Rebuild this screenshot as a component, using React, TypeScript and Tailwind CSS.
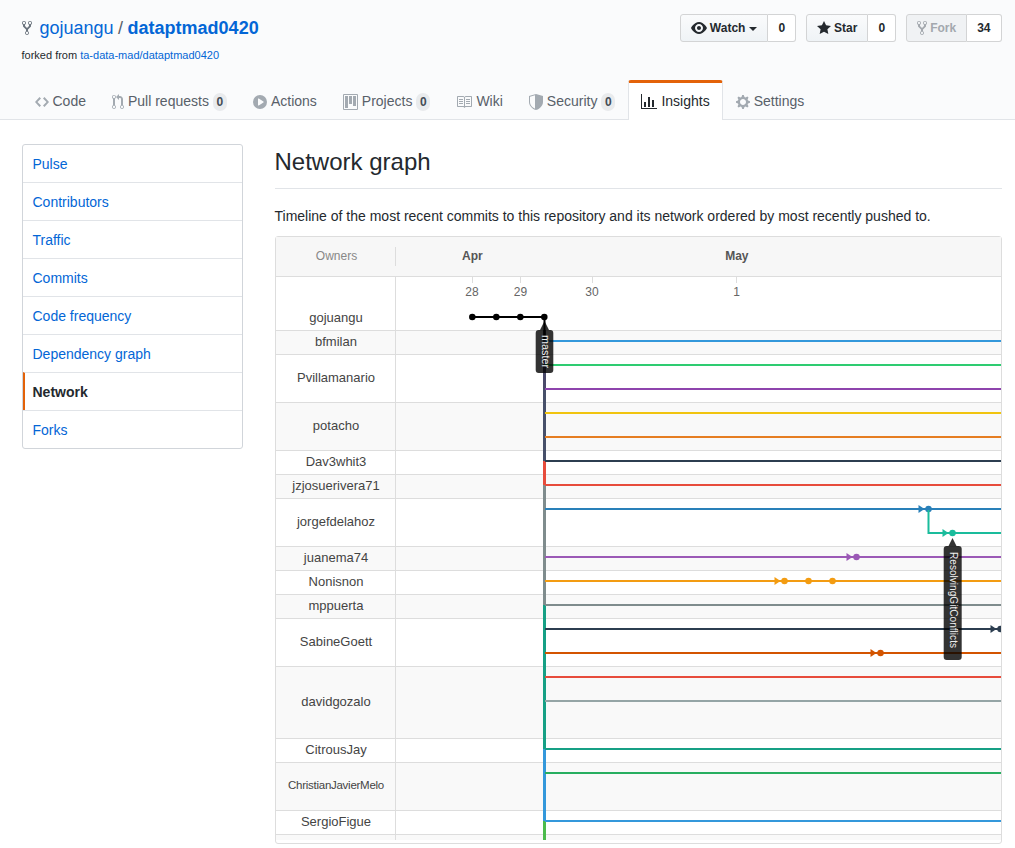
import React from "react";

const P = {
  code: ["0 0 14 16", "M9.5 3L8 4.5 11.5 8 8 11.5 9.5 13 14 8 9.5 3zm-5 0L0 8l4.5 5L6 11.5 2.5 8 6 4.5 4.5 3z"],
  pr: ["0 0 12 16", "M11 11.28V5c-.03-.78-.34-1.47-.94-2.06C9.46 2.35 8.78 2.03 8 2H7V0L4 3l3 3V4h1c.27.02.48.11.69.31.21.2.3.42.31.69v6.28A1.993 1.993 0 0 0 10 15a1.993 1.993 0 0 0 1-3.72zm-1 2.92c-.66 0-1.2-.55-1.2-1.2 0-.65.55-1.2 1.2-1.2.65 0 1.2.55 1.2 1.2 0 .65-.55 1.2-1.2 1.2zM4 3c0-1.11-.89-2-2-2a1.993 1.993 0 0 0-1 3.72v6.56A1.993 1.993 0 0 0 2 15a1.993 1.993 0 0 0 1-3.72V4.72c.59-.34 1-.98 1-1.72zm-.8 10c0 .66-.55 1.2-1.2 1.2-.65 0-1.2-.55-1.2-1.2 0-.65.55-1.2 1.2-1.2.65 0 1.2.55 1.2 1.2zM2 4.2C1.34 4.2.8 3.65.8 3c0-.65.55-1.2 1.2-1.2.65 0 1.2.55 1.2 1.2 0 .65-.55 1.2-1.2 1.2z"],
  play: ["0 0 14 16", "M14 8A7 7 0 1 1 0 8a7 7 0 0 1 14 0zm-8.223 3.482l4.599-3.066a.5.5 0 0 0 0-.832L5.777 4.518A.5.5 0 0 0 5 4.934v6.132a.5.5 0 0 0 .777.416z"],
  project: ["0 0 15 16", "M10 12h3V2h-3v10zm-4-2h3V2H6v8zm-4 4h3V2H2v12zm-1 1h13V1H1v14zM14 0H1a1 1 0 0 0-1 1v14a1 1 0 0 0 1 1h13a1 1 0 0 0 1-1V1a1 1 0 0 0-1-1z"],
  book: ["0 0 16 16", "M3 5h4v1H3V5zm0 3h4V7H3v1zm0 2h4V9H3v1zm11-5h-4v1h4V5zm0 2h-4v1h4V7zm0 2h-4v1h4V9zm2-6v9c0 .55-.45 1-1 1H9.5l-1 1-1-1H2c-.55 0-1-.45-1-1V3c0-.55.45-1 1-1h5.5l1 1 1-1H15c.55 0 1 .45 1 1zm-8 .5L7.5 3H2v9h6V3.5zm7-.5H9.5l-.5.5V12h6V3z"],
  shield: ["0 0 14 16", "M0 2l7-2 7 2v6.02C14 12.69 8.69 16 7 16c-1.69 0-7-3.31-7-7.98V2zm1 .75v5.27c0 3.58 3.3 5.98 5 6.61V1.33L1 2.75z"],
  graph: ["0 0 16 16", "M16 14v1H0V0h1v14h15zM5 13H3V8h2v5zm4 0H7V3h2v10zm4 0h-2V6h2v7z"],
  gear: ["0 0 14 16", "M14 8.77v-1.6l-1.94-.64-.45-1.09.88-1.84-1.13-1.13-1.81.91-1.09-.45-.69-1.92h-1.6l-.63 1.94-1.11.45-1.84-.88-1.13 1.13.91 1.81-.45 1.09L0 7.23v1.59l1.94.64.45 1.09-.88 1.84 1.13 1.13 1.81-.91 1.09.45.69 1.92h1.59l.63-1.94 1.11-.45 1.84.88 1.13-1.13-.92-1.81.47-1.09L14 8.75v.02zM7 11c-1.66 0-3-1.34-3-3s1.34-3 3-3 3 1.34 3 3-1.34 3-3 3z"],
  eye: ["0 0 16 16", "M8.06 2C3 2 0 8 0 8s3 6 8.06 6C13 14 16 8 16 8s-3-6-7.94-6zM8 12c-2.2 0-4-1.78-4-4 0-2.2 1.8-4 4-4 2.22 0 4 1.8 4 4 0 2.22-1.78 4-4 4zm2-4c0 1.11-.89 2-2 2-1.11 0-2-.89-2-2 0-1.11.89-2 2-2 1.11 0 2 .89 2 2z"],
  star: ["0 0 14 16", "M14 6l-4.9-.64L7 1 4.9 5.36 0 6l3.6 3.26L2.67 14 7 11.67 11.33 14l-.93-4.74L14 6z"],
  fork: ["0 0 10 16", "M8 1a1.993 1.993 0 0 0-1 3.72V6L5 8 3 6V4.72A1.993 1.993 0 0 0 2 1a1.993 1.993 0 0 0-1 3.72V6.5l3 3v1.78A1.993 1.993 0 0 0 5 15a1.993 1.993 0 0 0 1-3.72V9.5l3-3V4.72A1.993 1.993 0 0 0 8 1zM2 4.2C1.34 4.2.8 3.65.8 3c0-.65.55-1.2 1.2-1.2.65 0 1.2.55 1.2 1.2 0 .65-.55 1.2-1.2 1.2zm3 10c-.66 0-1.2-.55-1.2-1.2 0-.65.55-1.2 1.2-1.2.65 0 1.2.55 1.2 1.2 0 .65-.55 1.2-1.2 1.2zm3-10c-.66 0-1.2-.55-1.2-1.2 0-.65.55-1.2 1.2-1.2.65 0 1.2.55 1.2 1.2 0 .65-.55 1.2-1.2 1.2z"],
} as const;

function Icon({ n, className }: { n: keyof typeof P; className: string }) {
  return (
    <svg viewBox={P[n][0]} className={className} fill="currentColor" aria-hidden>
      <path fillRule="evenodd" d={P[n][1]} />
    </svg>
  );
}

function Counter({ v }: { v: string }) {
  return (
    <span className="ml-1 inline-block h-[18px] rounded-[20px] bg-[#e9ebed] px-[3.67px] text-center text-[12px] font-semibold leading-[18px] text-[#444d56]">
      {v}
    </span>
  );
}

function Tab({ icon, w, label, count, active }: { icon: keyof typeof P; w: string; label: string; count?: string; active?: boolean }) {
  return (
    <div
      className={
        active
          ? "-mb-px flex h-[40px] items-center rounded-t-[3px] border-x border-t-[3px] border-x-[#e1e4e8] border-t-[#e36209] bg-white px-3 text-[#24292e]"
          : "flex h-[40px] items-center border-t-[3px] border-transparent px-[13px] pt-0 text-[#586069]"
      }
    >
      <Icon n={icon} className={`${w} h-4 mr-1 ${active ? "text-[#24292e]" : "text-[#a3aab1]"}`} />
      <span>{label}</span>
      {count && <Counter v={count} />}
    </div>
  );
}

function Btn({ icon, w, label, caret, count, disabled }: { icon: keyof typeof P; w: string; label: string; caret?: boolean; count: string; disabled?: boolean }) {
  return (
    <div className="flex h-[28px] text-[12px] font-semibold leading-[20px]">
      <div className={`flex items-center rounded-l-[3px] border border-[#d3d4d5] px-[10px] ${disabled ? "bg-[#f0f2f4] text-[#a3a8ae]" : "bg-gradient-to-b from-[#fafbfc] to-[#eff3f6] text-[#24292e]"}`}>
        <Icon n={icon} className={`${w} h-4 mr-[3px] ${disabled ? "text-[#a3a8ae]" : ""}`} />
        <span>{label}</span>
        {caret && <span className="ml-1 mt-px h-0 w-0 border-x-4 border-t-4 border-x-transparent border-t-[#24292e]" />}
      </div>
      <div className="flex items-center rounded-r-[3px] border border-l-0 border-[#d3d4d5] bg-white px-[10px] text-[#24292e]">{count}</div>
    </div>
  );
}

const side = ["Pulse", "Contributors", "Traffic", "Commits", "Code frequency", "Dependency graph", "Network", "Forks"];

const rows: [string, number, string?][] = [
  ["gojuangu", 53],
  ["bfmilan", 24],
  ["Pvillamanario", 48],
  ["potacho", 48],
  ["Dav3whit3", 24],
  ["jzjosuerivera71", 24],
  ["jorgefdelahoz", 48],
  ["juanema74", 24],
  ["Nonisnon", 24],
  ["mppuerta", 24],
  ["SabineGoett", 48],
  ["davidgozalo", 72],
  ["CitrousJay", 24],
  ["ChristianJavierMelo", 48, "small"],
  ["SergioFigue", 24],
  ["", 6],
];

const lines: [number, string][] = [
  [341, "#3498db"], [365, "#2ecc71"], [389, "#8e44ad"], [413, "#f1c40f"], [437, "#e67e22"],
  [461, "#2c3e50"], [485, "#e74c3c"], [509, "#2980b9"], [557, "#9b59b6"], [581, "#f39c12"],
  [605, "#7f8c8d"], [629, "#2c3e50"], [653, "#d35400"], [677, "#e74c3c"], [701, "#95a5a6"],
  [749, "#16a085"], [773, "#27ae60"], [821, "#3498db"],
];

const trunk: [number, number, string][] = [
  [330, 389, "#4a4a6a"], [389, 461, "#47506a"], [461, 485, "#e74c3c"], [485, 605, "#7f8c8d"],
  [605, 749, "#16a085"], [749, 821, "#3498db"], [821, 840, "#4cbb4c"],
];

function Arrow({ x, y, c }: { x: number; y: number; c: string }) {
  return <polygon points={`${x},${y - 4} ${x + 6},${y} ${x},${y + 4}`} fill={c} />;
}

function Graph() {
  return (
    <svg viewBox="275 236 727 608" className="absolute -inset-px h-[608px] w-[727px]">
      <defs>
        <clipPath id="g"><rect x="275" y="236" width="726" height="608" /></clipPath>
      </defs>
      <g clipPath="url(#g)">
        {[472, 520, 592, 736].map((x) => (
          <line key={x} x1={x + 0.5} x2={x + 0.5} y1="277" y2="283" stroke="#dddddd" strokeWidth="1" />
        ))}
        {[["28", 472], ["29", 520.5], ["30", 592], ["1", 736.5]].map(([t, x]) => (
          <text key={t} x={x} y="295.5" textAnchor="middle" fontSize="12" fill="#666" fontFamily="'Liberation Sans', sans-serif">{t}</text>
        ))}
        {trunk.map(([a, b, c]) => (
          <line key={a} x1="544.5" x2="544.5" y1={a} y2={b} stroke={c} strokeWidth="3" />
        ))}
        {lines.map(([y, c]) => (
          <line key={y} x1="545" x2="1002" y1={y} y2={y} stroke={c} strokeWidth="2" />
        ))}
        <line x1="472" x2="544" y1="317" y2="317" stroke="#000" strokeWidth="2" />
        <line x1="544.5" x2="544.5" y1="317" y2="340" stroke="#000" strokeWidth="2" />
        {[472, 496, 520, 544].map((x) => <circle key={x} cx={x + 0.3} cy="317" r="3.25" fill="#000" />)}
        <Arrow x={918.5} y={509} c="#2980b9" />
        <circle cx="928.5" cy="509" r="3.25" fill="#2980b9" />
        <path d="M928.5 510V533H1002" stroke="#1abc9c" strokeWidth="2" fill="none" />
        <Arrow x={942.5} y={533} c="#1abc9c" />
        <circle cx="952.5" cy="533" r="3.25" fill="#1abc9c" />
        <Arrow x={846.5} y={557} c="#9b59b6" />
        <circle cx="856.5" cy="557" r="3.25" fill="#9b59b6" />
        <Arrow x={774.5} y={581} c="#f39c12" />
        {[784.5, 808.5, 832.5].map((x) => <circle key={x} cx={x} cy="581" r="3.25" fill="#f39c12" />)}
        <Arrow x={990.5} y={629} c="#2c3e50" />
        <circle cx="1000.5" cy="629" r="3.25" fill="#2c3e50" />
        <Arrow x={870.5} y={653} c="#d35400" />
        <circle cx="880.5" cy="653" r="3.25" fill="#d35400" />
        <polygon points="544.5,321 549,330 540,330" fill="#000" fillOpacity="0.8" />
        <rect x="535.7" y="330" width="17.6" height="43" rx="3" fill="#000" fillOpacity="0.8" />
        <text transform="translate(541.5,335) rotate(90)" fontSize="11" fill="#eee" textLength="33" lengthAdjust="spacingAndGlyphs" fontFamily="'Liberation Sans', sans-serif">master</text>
        <polygon points="952.5,538 956.5,546 948.5,546" fill="#000" fillOpacity="0.8" />
        <rect x="943.7" y="546" width="18" height="114" rx="3" fill="#000" fillOpacity="0.8" />
        <text transform="translate(949.5,552) rotate(90)" fontSize="11" fill="#eee" textLength="96" lengthAdjust="spacingAndGlyphs" fontFamily="'Liberation Sans', sans-serif">ResolvingGitConflicts</text>
      </g>
    </svg>
  );
}

export default function App() {
  return (
    <div className="min-h-[848px] bg-white font-['Liberation_Sans',sans-serif] text-[14px] leading-[21px] text-[#24292e]">
      <div className="h-[120px] border-b border-[#e1e4e8] bg-[#fafbfc]">
        <div className="ml-[21.5px] flex w-[980px] items-start justify-between pt-[14px]">
          <div>
            <div className="flex h-[28px] items-center text-[18px] leading-[26px]">
              <Icon n="fork" className="mr-2 h-4 w-[10px] text-[#6a737d]" />
              <span className="text-[#0366d6]">gojuangu</span>
              <span className="mx-[4.5px] text-[#586069]">/</span>
              <span className="font-semibold text-[#0366d6]">dataptmad0420</span>
            </div>
            <div className="mt-[5px] text-[11px] leading-[16px]">
              forked from <span className="text-[#0366d6]">ta-data-mad/dataptmad0420</span>
            </div>
          </div>
          <div className="flex gap-[10px]">
            <Btn icon="eye" w="w-4" label="Watch" caret count="0" />
            <Btn icon="star" w="w-[14px]" label="Star" count="0" />
            <Btn icon="fork" w="w-[10px]" label="Fork" count="34" disabled />
          </div>
        </div>
        <div className="ml-[21.5px] mt-[17px] flex">
          <Tab icon="code" w="w-[14px]" label="Code" />
          <Tab icon="pr" w="w-3" label="Pull requests" count="0" />
          <Tab icon="play" w="w-[14px]" label="Actions" />
          <Tab icon="project" w="w-[15px]" label="Projects" count="0" />
          <Tab icon="book" w="w-4" label="Wiki" />
          <Tab icon="shield" w="w-[14px]" label="Security" count="0" />
          <Tab icon="graph" w="w-4" label="Insights" active />
          <Tab icon="gear" w="w-[14px]" label="Settings" />
        </div>
      </div>

      <div className="ml-[21.5px] mt-6 flex w-[980px]">
        <div className="w-[221px] shrink-0">
          <div className="overflow-hidden rounded-[3px] border border-[#d1d5da]">
            {side.map((s, i) => (
              <div
                key={s}
                className={`px-[10px] py-[9px] ${i ? "h-[38px] border-t border-[#e1e4e8]" : "h-[37px]"} ${
                  s === "Network" ? "border-l-2 border-l-[#e36209] pl-2 font-semibold text-[#24292e]" : "text-[#0366d6]"
                }`}
              >
                {s}
              </div>
            ))}
          </div>
        </div>
        <div className="ml-8 min-w-0 flex-1">
          <h1 className="border-b border-[#e1e4e8] pt-px pb-[9px] text-[24px] font-normal leading-[34px]">Network graph</h1>
          <p className="mt-[17px] mb-[9px] leading-[21px]">
            Timeline of the most recent commits to this repository and its network ordered by most recently pushed to.
          </p>
          <div className="relative h-[608px] rounded-[3px] border border-[#dddddd]">
            <div className="flex h-[40px] border-b border-[#dddddd] bg-[#f7f7f7] text-[12px]">
              <div className="flex w-[119px] items-center justify-center pl-[3px] text-[#888]">
                <span>Owners</span>
              </div>
              <div className="my-[10px] border-l border-[#dddddd]" />
              <div className="flex flex-1 font-bold text-[#555]">
                <span className="ml-[66.5px] pt-[9px]">Apr</span>
                <span className="ml-[242.5px] pt-[9px]">May</span>
              </div>
            </div>
            {rows.map(([name, h, small], i) => (
              <div
                key={i}
                style={{ height: h }}
                className={`flex border-[#dddddd] ${i ? "border-t" : ""} ${i % 2 ? "bg-[#f9f9f9]" : "bg-white"}`}
              >
                <div className={`w-[120px] border-r border-[#dddddd] pl-[2px] text-center text-[#444] ${small ? "text-[11.5px] tracking-[-0.27px]" : "text-[13px]"} ${i === 0 ? "flex items-end justify-center pb-[2px]" : "flex items-center justify-center pb-[2px]"}`}>
                  {name}
                </div>
              </div>
            ))}
            <Graph />
          </div>
        </div>
      </div>
    </div>
  );
}
